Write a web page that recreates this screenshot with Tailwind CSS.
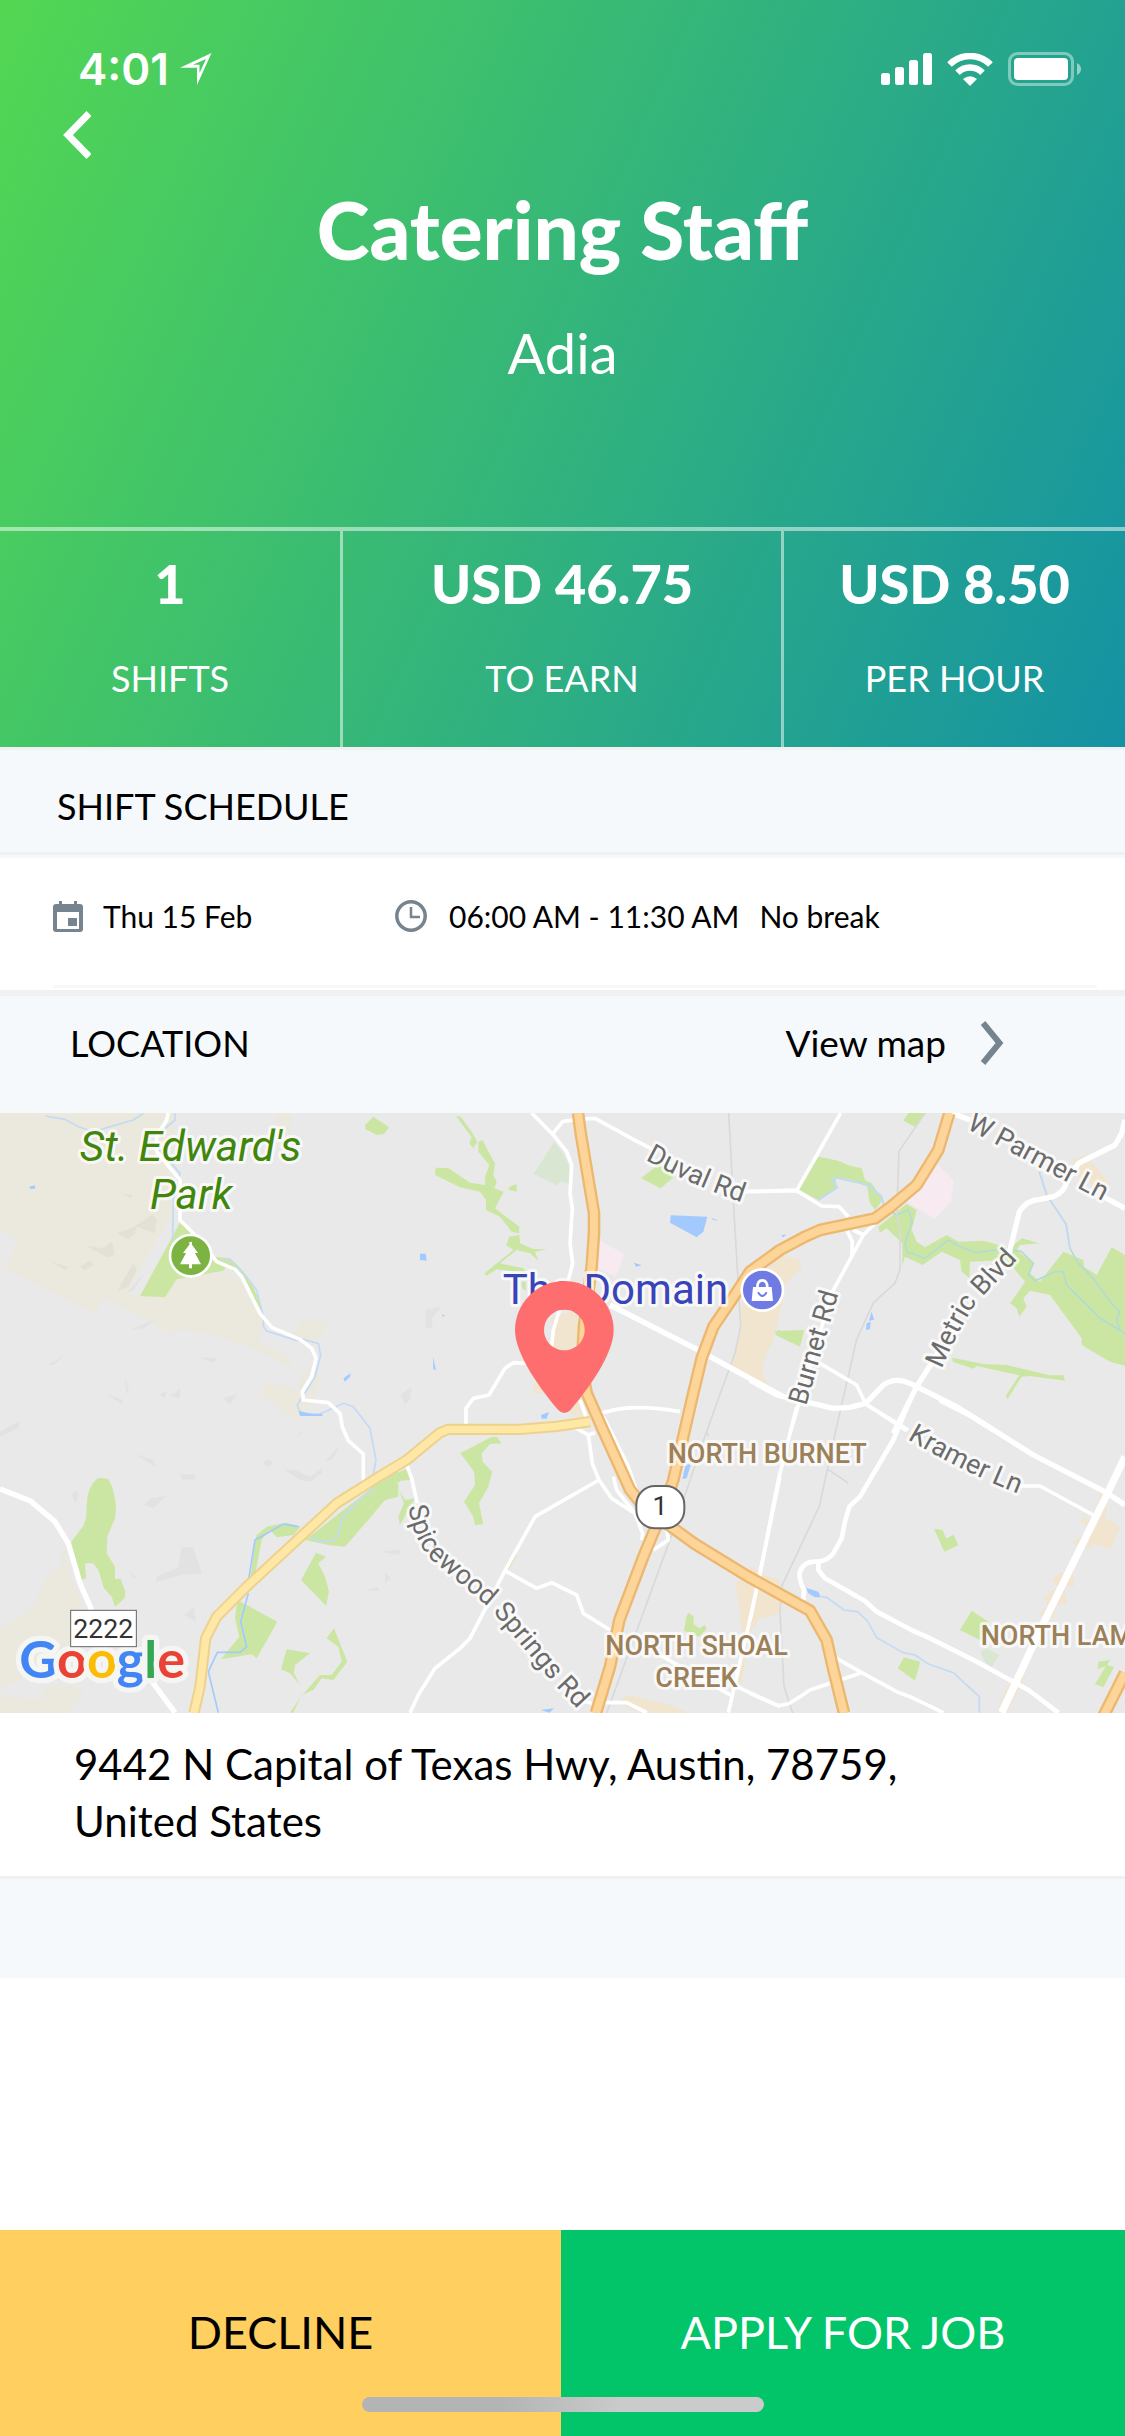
<!DOCTYPE html>
<html lang="en">
<head>
<meta charset="utf-8">
<meta name="viewport" content="width=device-width, initial-scale=1">
<title>Catering Staff – Adia</title>
<script src="https://cdn.jsdelivr.net/npm/@tailwindcss/browser@4"></script>
</head>
<body class="flex min-h-screen flex-col bg-white font-['Lato',sans-serif] text-black">

<header class="bg-[linear-gradient(114deg,#53d752,#1492a4)] text-white">
  <div class="flex h-[90px] items-center justify-between pt-12 pr-[44px] pl-[78px]">
    <div class="flex items-center gap-[11px]">
      <span class="font-['Inter',sans-serif] text-[44px] leading-[42px] font-semibold">4:01</span>
      <svg class="h-8 w-8" viewBox="0 0 32 32" fill="currentColor" fill-rule="evenodd" aria-hidden="true"><path d="M31.500 0 L0 14.800 H17 V32 Z M26 6 L13 11.800 H19.500 V20 Z" /></svg>
    </div>
    <div class="flex items-center gap-[15px]">
      <svg class="h-8 w-[51px]" viewBox="0 0 51 32" fill="currentColor" aria-hidden="true"><rect y="20" width="9" height="12" rx="2.500"/><rect x="14" y="14" width="9" height="18" rx="2.500"/><rect x="28" y="7" width="9" height="25" rx="2.500"/><rect x="42" width="9" height="32" rx="2.500"/></svg>
      <svg class="h-[33px] w-[46px]" viewBox="0 0 46 33" aria-hidden="true"><g fill="none" stroke="currentColor" stroke-width="6.500"><path d="M2.500 11.500 a29 29 0 0 1 41 0"/><path d="M10.500 19.700 a17.700 17.700 0 0 1 25 0"/></g><path fill="currentColor" d="M16 26 q7 -5.500 14 0 L23 33 Z"/></svg>
      <svg class="h-[34px] w-[73px]" viewBox="0 0 73 34" aria-hidden="true"><rect x="1.500" y="1.500" width="63" height="31" rx="8" fill="none" stroke="#fff" stroke-opacity=".42" stroke-width="3"/><rect x="6" y="6" width="54" height="22" rx="4" fill="#fff"/><path d="M69 11 q4 2 4 6 t-4 6 Z" fill="#fff" fill-opacity=".5"/></svg>
    </div>
  </div>
  <button type="button" aria-label="Back" class="mt-[21px] ml-[63px] block">
    <svg class="h-12 w-7" viewBox="0 0 28 48" fill="none" stroke="currentColor" stroke-width="7"><path d="M26 2.500 L5 24 L26 45.500"/></svg>
  </button>
  <h1 class="mt-[25px] text-center text-[80px] leading-[90px] font-black">Catering Staff</h1>
  <p class="mt-[49px] text-center text-[56px] leading-[60px]">Adia</p>
  <dl class="mt-36 grid grid-cols-[343fr_441fr_341fr] border-t-4 border-white/50 text-center">
    <div class="flex flex-col-reverse gap-[42px] border-r-[3px] border-white/50 pt-[23px] pb-[47px]">
      <dt class="text-[36px] leading-[44px]">SHIFTS</dt>
      <dd class="text-[54px] leading-[60px] font-black">1</dd>
    </div>
    <div class="flex flex-col-reverse gap-[42px] border-r-[3px] border-white/50 pt-[23px] pb-[47px]">
      <dt class="text-[36px] leading-[44px]">TO EARN</dt>
      <dd class="text-[54px] leading-[60px] font-black">USD 46.75</dd>
    </div>
    <div class="flex flex-col-reverse gap-[42px] pt-[23px] pb-[47px]">
      <dt class="text-[36px] leading-[44px]">PER HOUR</dt>
      <dd class="text-[54px] leading-[60px] font-black">USD 8.50</dd>
    </div>
  </dl>
</header>

<main class="flex-1">
  <section>
    <div class="border-b-[3px] border-[#f5f9fc]">
      <h2 class="border-y-[3px] border-[#f1f1f1] bg-[#f5f9fc] pt-[34px] pb-[24px] pl-[57px] text-[36px] leading-[44px]">SHIFT SCHEDULE</h2>
    </div>
    <div class="mb-[2px] ml-[53px] mr-7 flex items-center border-b-[3px] border-[#f5f9fc] pt-[38px] pb-[49px] text-[30px] leading-10">
      <div class="flex w-[342px] items-center gap-5">
        <svg class="h-8 w-[30px]" viewBox="0 0 30 32" fill="#75848f" aria-hidden="true"><path fill-rule="evenodd" d="M6 1 h3 v3 h12 v-3 h3 v3 h3 a3 3 0 0 1 3 3 v22 a3 3 0 0 1 -3 3 H3 a3 3 0 0 1 -3 -3 V7 a3 3 0 0 1 3 -3 h3 Z M4 12 V29 H26 V12 Z"/><path d="M15 18 h9 v8 h-9 Z"/></svg>
        <span>Thu 15 Feb</span>
      </div>
      <svg class="mr-[22px] h-8 w-8" viewBox="0 0 32 32" fill="none" stroke="#75848f" stroke-width="3.500" aria-hidden="true"><circle cx="16" cy="16" r="14.200"/><path stroke-width="2.500" d="M16 7 V17 H25"/></svg>
      <span>06:00 AM - 11:30 AM</span>
      <span class="ml-5">No break</span>
    </div>
  </section>

  <section>
    <div class="flex items-center justify-between border-t-[6px] border-[#f1f1f1] bg-[#f5f9fc] pt-[25px] pr-[121px] pb-12 pl-[70px]">
      <h2 class="text-[36px] leading-[44px]">LOCATION</h2>
      <a href="#map" class="flex items-center gap-[35px] text-[37px] leading-[44px]">View map
        <svg class="h-11 w-[23px]" viewBox="0 0 23 44" fill="none" stroke="#75848f" stroke-width="6" aria-hidden="true"><path d="M2 2 L18.500 22 L2 42"/></svg>
      </a>
    </div>

    <svg id="map" class="block h-auto w-full bg-[#e9e9e9] font-['Roboto',sans-serif]" viewBox="0 0 3375 1800" role="img" aria-label="Map of north Austin with the job location">
      <!-- Land cover -->
      <g transform="translate(0 -339)">
        <path fill="#ebe8dd" d="M0 339 H525 L520 640 L440 770 L385 880 L420 888 L495 890 L530 838 L680 812 L725 850 L790 960 L775 1025 L850 1060 L885 1110 L760 1045 L620 1000 L525 990 L515 1005 L310 890 L288 942 L15 805 L55 722 L0 690 Z M825 339 H875 L870 400 H840 Z M905 958 L985 970 L950 1025 L880 1005 Z M910 1110 L965 1130 L940 1200 L890 1265 L780 1180 L800 1145 L890 1170 Z"/>
        <path fill="#e3e1d6" d="M350 700 L400 682 L455 645 L470 655 L465 700 L410 680 L405 700 L385 718 Z M258 737 L310 745 L335 725 L345 765 L320 772 Z M350 875 L400 790 L410 810 L385 860 Z M155 785 L205 800 L195 810 Z M240 800 L270 780 L280 795 L255 810 Z M365 580 L395 585 V595 Z"/>
        <path fill="#e2e2e2" d="M143 1095 L190 1068 L160 1095 Z M395 988 L465 958 L430 985 Z M597 1072 L650 1075 L640 1088 Z M375 1130 L388 1180 L378 1175 Z M380 880 L440 810 L400 870 Z"/>
        <path fill="#cbe6a3" d="M540 668 L600 720 L640 770 L690 775 Q760 830 785 930 L780 940 L715 825 L680 800 L670 812 L530 838 L495 892 L420 888 Z M1095 375 L1120 350 L1167 382 L1152 402 L1130 405 L1097 388 Z"/>
        <g fill="none" stroke="#c3daf6" stroke-width="5"><path d="M137 348 L195 358 L235 380 L280 395 L400 360 L430 340 M525 340 V360 L490 390 M470 440 L540 520 L520 600 L518 720 M665 780 L690 778 L735 825 L770 870 L790 950 L790 980 L800 993 L890 1022 L910 1018 L955 1030 L962 1065 L945 1130 L915 1180"/></g>
        <path fill="#a3caff" d="M88 560 L105 556 V566 H90 Z M1030 1135 L1052 1120 L1050 1130 L1035 1145 Z"/>
      </g>
      <g transform="translate(1140 -39)">
        <path fill="#cbe6a3" d="M228 48 L242 50 L275 95 L292 125 L280 145 L268 130 L275 112 Z M0 65 L25 85 L0 105 Z M295 125 L308 120 L325 155 L345 190 L340 225 L350 245 L343 265 L371 275 L345 325 L418 380 L417 400 L395 395 L360 350 L318 330 V300 L300 275 L240 262 L165 225 L167 203 L205 204 L270 248 L315 255 L316 228 L328 195 L295 155 Z M385 262 L410 252 V275 L388 270 Z M388 410 L418 405 L420 430 L460 447 L500 448 L465 455 L475 482 L450 460 L410 450 L360 490 L430 505 L440 520 L350 508 L320 527 L313 520 L400 450 L378 435 Z M838 192 L885 228 L842 265 L783 235 Z M425 545 L437 545 V572 L427 565 Z M1185 695 L1200 690 V712 Z"/>
        <path fill="#d9e7d2" d="M523 125 L545 155 L565 190 L575 255 L545 243 L530 256 L461 222 Z"/>
        <path fill="#f7ebf1" d="M660 422 L732 462 L708 530 L655 505 Z"/>
        <path fill="#f1e5d0" d="M1200 465 L1262 480 L1265 505 L1215 555 L1200 640 L1180 720 L1160 760 L1145 810 L1165 860 L1055 800 L1080 700 L1085 610 L1120 560 Z M455 880 L470 840 L510 880 Z M515 650 L590 630 L610 750 L510 760 Z M565 935 L600 890 L612 960 Z"/>
        <path fill="#a3caff" d="M872 346 L982 350 L970 395 L950 412 L870 368 Z M993 353 L1016 362 L1000 360 Z M762 488 L785 496 L768 500 Z M120 461 H137 L140 482 L120 480 Z M187 642 L195 648 L188 650 Z M159 770 L168 810 L160 808 Z M483 945 L507 936 L500 956 H485 Z"/>
        <path fill="#e2e2e2" d="M137 630 L185 620 L155 655 L158 685 L137 684 Z M62 885 L95 862 L90 898 L75 913 Z"/>
      </g>
      <g transform="translate(2250 -39)">
        <path fill="#cbe6a3" d="M475 39 H530 L495 80 L460 62 Z M205 170 L265 182 L300 197 L335 205 L345 240 L365 250 L398 300 L375 330 L358 305 L352 260 L300 238 L255 232 L262 265 L205 300 L145 268 Z M75 693 L163 690 L150 740 L78 706 Z M607 773 L700 792 L770 795 L900 826 L940 826 L945 842 L840 828 L815 830 L772 898 L767 888 L808 826 L680 798 L670 806 L608 785 Z M385 380 L470 312 L500 330 L485 390 L500 425 L525 442 L590 405 L625 425 L700 422 L780 445 L815 415 L868 430 L810 435 L800 450 L850 490 L840 520 L870 545 L940 455 L1000 480 L1002 500 L1040 525 L1085 442 L1125 465 V797 L1080 785 L995 735 V715 L900 585 L840 572 L820 595 L830 620 L808 650 L800 625 L780 610 L805 575 L825 545 L770 480 L660 485 L658 535 L635 515 L630 480 L575 455 L518 495 L465 470 L457 497 V430 L410 385 L390 398 Z"/>
        <path fill="#f7ebf1" d="M563 194 L611 240 L603 305 L555 358 L470 305 Z"/>
        <path fill="#f1e5d0" d="M968 178 L1010 165 L1080 255 L1065 275 L980 225 Z M0 640 L85 645 L75 670 L55 690 L50 760 L30 800 L52 855 L0 840 Z"/>
        <g fill="none" stroke="#c3daf6" stroke-width="5"><path d="M205 300 L262 262 L245 242 L260 233 L355 255 L395 290 L402 320 L440 345 L475 330 L487 365 L465 430 L470 455 L525 475 L595 420 L630 440 L680 458 L770 445 L815 455 L850 490 L835 525 L855 543 L915 515 L940 515 L950 555 L1050 655 L1125 700 M868 215 L890 285 L948 372 L960 445 L985 490 L1025 530 L1085 610 L1110 635 L1100 660 L1110 690" stroke="#b4dbd3"/><path d="M868 215 L890 285 L948 372 L960 445 M205 300 L262 262 L245 242 L260 233 L355 255 L395 290 L402 320"/></g>
        <path fill="#a3caff" d="M365 635 L372 660 L357 662 Z M350 670 L362 665 L360 687 L348 690 Z M95 405 L110 404 L98 412 Z"/>
      </g>
      <g transform="translate(0 801)">
        <path fill="#ebe8dd" d="M195 490 L200 545 L250 690 L200 800 L60 760 L0 750 L100 680 L135 600 L190 550 L180 520 Z M0 740 L200 680 L210 800 L60 900 L0 925 Z M0 950 L130 960 V925 L180 912 L250 930 L235 960 L205 1000 H0 Z"/>
        <path fill="#cbe6a3" d="M300 293 L325 297 Q345 330 348 385 L345 415 L322 470 L320 520 L345 560 V597 L362 597 L376 635 L374 655 L345 680 L335 650 L312 625 L295 570 L280 550 H255 L258 595 L245 600 L212 488 L250 437 L258 415 L262 350 Q275 300 300 293 Z M770 465 L800 440 L860 428 L902 440 L880 465 L830 472 L810 450 L785 480 L770 560 L765 600 L750 605 L765 480 Z M915 480 L1120 320 L1195 308 V350 L1155 360 L1100 425 L1035 500 L985 495 Z M1195 275 L1200 305 L1125 325 L1100 320 Z M948 518 L978 530 L955 550 L975 590 L987 635 L978 677 L903 600 Z M712 660 L832 725 L770 835 L755 823 L663 838 L718 770 L705 715 Z M1002 745 L1042 845 L1000 900 L965 895 L940 930 L905 945 L880 998 H870 L903 950 L960 885 L995 885 L1025 845 L1015 800 L980 775 Z M860 808 L930 820 L885 855 L882 880 L900 915 L870 880 L843 868 Z"/>
        <path fill="#e2e2e2" d="M545 502 L580 500 L605 580 L545 585 L490 600 L467 605 L470 590 L535 562 Z M405 222 L460 240 L468 262 Z M430 375 L455 355 L498 348 L460 385 Z M852 268 L885 270 L930 290 L967 265 L965 280 L930 305 L900 300 Z M0 155 L60 122 L55 145 L0 170 Z M320 42 L368 60 V75 Z M540 283 H585 V297 L550 300 Z M215 345 L228 330 L235 345 L228 370 Z M880 180 L915 145 L900 165 Z M975 245 L1018 195 L1000 235 Z M553 705 L580 680 L588 725 Z M390 573 L415 598 L395 588 Z M1095 630 L1135 620 V632 Z M1155 575 L1172 595 L1155 612 Z M1140 515 L1200 510 V525 Z M670 55 L712 42 L690 73 Z M480 45 L500 30 L495 55 Z M510 48 L540 28 V55 Z M790 245 L805 238 L820 250 L800 262 Z"/>
        <g fill="none" stroke="#c3daf6" stroke-width="5"><path d="M935 0 L892 75 L900 100 L960 102 L1030 70 L1060 80 L1110 145 L1128 240 L1120 285 M1125 325 L1070 365 L1025 415 L1015 465 L995 482 L960 485 L935 470"/><path stroke="#a3caff" d="M895 440 L850 432 L765 480 L745 605 M745 640 L722 725 L740 800 L720 817 H652 L625 875 L655 998"/></g>
        <path fill="#a3caff" d="M897 92 L935 103 L967 102 V108 H900 Z"/>
      </g>
      <g transform="translate(1140 861)">
        <path fill="#cbe6a3" d="M333 112 L350 110 L365 130 L330 132 L305 160 L308 185 L337 215 L325 260 L297 310 L310 373 L285 375 L280 350 L252 305 L285 255 L282 215 L258 182 L240 160 Z M0 240 L85 205 L90 240 L30 245 Z M0 255 L50 250 L45 285 L0 310 Z M57 270 L75 300 L105 295 L60 375 L55 350 L72 310 Z M925 638 L942 650 L940 672 L958 685 L975 675 L980 687 L958 710 L912 692 L918 655 Z M382 505 L413 445 L410 465 L385 510 Z"/>
        <path fill="#f1e5d0" d="M1068 550 L1115 500 L1150 525 L1200 540 V640 L1150 655 L1130 640 L1110 715 L1085 690 Z M1075 780 L1100 760 L1085 850 L1060 860 Z M710 905 L745 885 L870 915 L925 938 H780 Z"/>
        <path fill="#a3caff" d="M918 190 L932 195 L920 235 L907 237 Z M482 930 L522 925 L508 938 Z"/>
      </g>
      <g transform="translate(2250 861)">
        <path fill="#cbe6a3" d="M552 386 L578 390 L588 416 L611 404 L625 436 L583 455 Z M665 632 L715 665 L700 725 L630 690 Z M462 772 L511 785 L495 842 L443 805 Z M1045 785 L1080 780 L1072 795 L1092 802 L1060 862 L1035 852 L1068 798 L1042 808 Z"/>
        <path fill="#d9e7d2" d="M690 755 L710 745 L748 765 L723 805 L705 785 Z"/>
        <path fill="#f1e5d0" d="M1050 280 L1075 290 L1065 350 L1110 382 L1080 448 L1025 430 L1030 445 L1000 440 L970 510 L972 560 L945 560 L950 612 L920 615 L910 655 L865 645 L890 620 L883 590 L925 560 L905 540 L930 520 L950 515 L985 440 L965 425 L1015 400 L1020 380 L990 365 L1000 352 L1030 365 Z M0 560 L35 520 L85 545 L65 655 L40 640 L20 670 L0 695 Z M805 825 L825 830 L790 900 L770 938 H740 L770 865 Z"/>
        <path fill="none" stroke="#c3daf6" stroke-width="5" d="M215 590 L230 592 L282 630 L322 635 L352 662 L380 713 L460 758 L495 765 L535 792 L610 818 L688 890 V938"/>
        <path fill="#a3caff" d="M168 563 L205 575 L213 592 L195 592 L175 580 Z"/>
      </g>

      <!-- Railways -->
      <path fill="none" stroke="#d9d9d9" stroke-width="5" d="M2186 0 L2205 350 L2222 640 L2205 720 L2120 955 L2125 970 M2120 955 L2010 1280 L1820 1800 M2775 0 L2697 115 L2690 300 L2700 350 V470 L2685 510 L2620 570 L2570 680 L2510 940 L2482 1070 L2458 1180 L2345 1420 L2340 1500 L2352 1720 L2378 1800 M2485 1070 L2545 1110"/>

      <!-- Streets -->
      <g fill="none" stroke="#fff" stroke-width="11" stroke-linejoin="round">
        <path transform="translate(0 -339)" d="M505 339 L500 360 L470 410 V455 L540 540 V660 L600 720 L650 785 L705 808 L725 830 L780 940 L815 982 L900 1018 L935 1045 L948 1075 L935 1130 L907 1175 L910 1200 L985 1208 L1020 1240 L1027 1280 L1045 1322 L1090 1362 V1445"/>
        <path transform="translate(0 801)" stroke-width="16" d="M0 327 L90 362 L165 425 L205 490 L240 610 L275 690 M445 890 L525 998"/>
        <g transform="translate(1140 -39)">
          <path d="M455 39 L520 105 L560 155 L575 195 L570 280 L577 325 L570 430 L578 490 L560 560 L520 690 L515 740 M515 105 L548 65 L590 58 L645 55 L760 118 L830 155 M1090 275 L1250 270 M258 980 V925 L280 895 L327 885 L375 805 L400 788 L440 790 M600 900 L625 970 M640 950 Q730 905 900 935"/>
          <path stroke-width="16" d="M690 615 L945 745 L1210 890"/>
        </g>
        <g transform="translate(2250 -39)">
          <path d="M272 39 L140 272 L0 275 M140 272 L215 318 L268 320 L295 350 M290 390 L307 425 L305 470 M395 350 L340 405 L245 580 L165 850 L120 1000 M310 390 L340 405 M210 790 L320 855 L347 912 L475 990"/>
          <path stroke-width="16" d="M0 840 L80 885 L250 925 L300 922 L347 910 L400 855 Q435 830 480 850 L620 920 L730 990 M605 39 L660 60 M1050 285 L1125 325 M775 470 L808 335 Q830 300 870 298 L910 290 Q945 275 950 245 L985 190 L1095 135 L1115 100 L1125 60 M570 750 L500 860 L430 1000"/>
        </g>
        <g transform="translate(1140 861)">
          <path d="M80 195 L95 235 L112 310 M580 80 L625 105 L637 190 L657 240 L695 295 L765 340 L788 400 L785 420 M625 105 L645 98 M657 240 L465 350 L375 512 L270 715 L240 745 L165 805 L115 885 L90 938 M375 512 L470 565 L515 548 L590 585 L610 640 L690 690 M670 50 L745 200 L770 275 M700 230 L710 270 L765 340 M820 450 L865 420 L860 390 M1200 230 L1140 520 L1105 680 L1045 938 M840 765 L1060 890 M1070 860 L1200 920 M675 908 H740 L800 938 M600 900 L635 910"/>
        </g>
        <g transform="translate(2250 861)">
          <path d="M140 20 L85 240 L30 520 L0 660 M347 12 L470 92 M800 258 H870 L1035 348 M260 775 L335 818 L440 875 L480 890 L580 938 M335 818 L180 870 L150 890 L115 912 L85 917 L0 880"/>
          <path stroke-width="14" d="M480 0 L430 120 L330 290 L298 320 L285 365 L275 415 L250 460 Q235 480 205 485 Q160 480 148 520 Q150 550 162 570 L160 600 M205 485 L205 510 L225 535 L345 603 L380 635 L490 693 L530 710 L680 785 L835 870 L925 938"/>
          <path stroke-width="16" d="M570 0 L660 45 L850 165 L1070 278 L1125 315"/>
          <path stroke-width="22" d="M1125 170 L1070 285 L885 660 L755 938"/>
        </g>
      </g>

      <!-- Highways -->
      <g fill="none" stroke-linejoin="round">
        <path stroke="#edd28e" stroke-width="34" d="M1770 926 L1670 940 L1560 949 H1345 L1320 959 L1220 1041 L1140 1089 L1010 1171 L740 1421 L650 1511 L617 1576 L600 1721 L582 1800"/>
        <path stroke="#ffe8a6" stroke-width="22" d="M1770 926 L1670 940 L1560 949 H1345 L1320 959 L1220 1041 L1140 1089 L1010 1171 L740 1421 L650 1511 L617 1576 L600 1721 L582 1800"/>
        <path stroke="#ecb76f" stroke-width="38" d="M1734 0 L1742 60 L1762 180 L1782 300 L1782 360 L1775 460 L1752 640 L1745 760 L1760 840 L1806 945 L1890 1130 L1930 1180 L2020 1246 L2085 1293 L2240 1388 L2430 1493 L2480 1581 L2500 1670 L2532 1800 M2848 0 L2815 111 L2750 216 L2670 283 L2625 316 L2460 351 L2415 371 L2340 411 L2250 476 L2195 560 L2140 641 L2105 735 L2075 861 L2020 1101 L1985 1200 L1930 1331 L1858 1521 L1830 1661 L1788 1800 M3375 1680 L3310 1810"/>
        <path stroke="#fed599" stroke-width="24" d="M1734 0 L1742 60 L1762 180 L1782 300 L1782 360 L1775 460 L1752 640 L1745 760 L1760 840 L1806 945 L1890 1130 L1930 1180 L2020 1246 L2085 1293 L2240 1388 L2430 1493 L2480 1581 L2500 1670 L2532 1800 M2848 0 L2815 111 L2750 216 L2670 283 L2625 316 L2460 351 L2415 371 L2340 411 L2250 476 L2195 560 L2140 641 L2105 735 L2075 861 L2020 1101 L1985 1200 L1930 1331 L1858 1521 L1830 1661 L1788 1800 M3375 1680 L3310 1810"/>
      </g>

      <!-- Labels -->
      <defs>
        <path id="duval" d="M1936 140 Q2100 230 2270 282"/>
        <path id="parmer" d="M2898 46 L3375 300"/>
        <path id="burnet" d="M2418 880 L2530 490"/>
        <path id="metric" d="M2825 768 Q2875 650 2925 575 L3080 410"/>
        <path id="kramer" d="M2722 978 Q2900 1085 3100 1160"/>
        <path id="spicewood" d="M1225 1180 Q1245 1310 1320 1361 L1470 1486 L1660 1711 L1790 1850"/>
      </defs>
      <g stroke="#fff" stroke-opacity=".7" stroke-width="18" stroke-linejoin="round" paint-order="stroke">
        <g fill="#6b6b6b" font-size="81">
          <text><textPath href="#duval">Duval Rd</textPath></text>
          <text><textPath href="#parmer">W Parmer Ln</textPath></text>
          <text><textPath href="#burnet">Burnet Rd</textPath></text>
          <text><textPath href="#metric">Metric Blvd</textPath></text>
          <text><textPath href="#kramer">Kramer Ln</textPath></text>
          <text><textPath href="#spicewood">Spicewood Springs Rd</textPath></text>
        </g>
        <g fill="#41860b" font-size="127" font-style="italic" text-anchor="middle"><text x="572" y="143">St. Edward's</text><text x="574" y="289">Park</text></g>
        <text x="1508" y="573" fill="#3844b8" font-size="126">The Domain</text>
        <g fill="#9b8058" font-size="81" font-weight="500"><text x="2003" y="1051">NORTH BURNET</text><text x="1816" y="1626">NORTH SHOAL</text><text x="1966" y="1723">CREEK</text><text x="2942" y="1597">NORTH LAMAR</text></g>
      </g>
      <g stroke="#fff" stroke-width="8">
        <circle cx="572" cy="428" r="62" fill="#7cb342"/>
        <circle cx="2287" cy="531" r="62" fill="#6f7be3"/>
      </g>
      <path fill="#fff" d="M568 387 h8 v8 l18 25 h-9 l18 34 h-27 v12 h-9 v-12 h-27 l18 -34 h-9 l19 -25 Z"/>
      <path fill="#fff" d="M2259 522 h56 l4 42 h-64 Z"/>
      <path fill="none" stroke="#fff" stroke-width="8" d="M2272 524 Q2272 502 2287 502 Q2302 502 2302 524"/>
      <path fill="none" stroke="#6f7be3" stroke-width="6" d="M2274 538 Q2287 560 2300 538"/>
      <rect x="1909" y="1119" width="144" height="127" rx="56" fill="#fff" stroke="#666" stroke-width="6"/>
      <text x="1980" y="1206" fill="#333" font-size="80" text-anchor="middle">1</text>
      <text x="58" y="1696" class="font-['Lato',sans-serif]" font-size="156" font-weight="700" stroke="#f5f5f3" stroke-width="32" stroke-linejoin="round" paint-order="stroke"><tspan fill="#4285f4">G</tspan><tspan fill="#ea4335">o</tspan><tspan fill="#fbbc05">o</tspan><tspan fill="#4285f4">g</tspan><tspan fill="#34a853">l</tspan><tspan fill="#ea4335">e</tspan></text>
      <rect x="212" y="1492" width="197" height="109" fill="#fff" stroke="#666" stroke-width="3"/>
      <text x="310" y="1574" fill="#333" font-size="80" text-anchor="middle">2222</text>
      <path fill="#ff6e6e" fill-rule="evenodd" d="M1693 504 A148 148 0 0 1 1841 652 C1841 725 1760 835 1712 890 Q1693 910 1674 890 C1626 835 1545 725 1545 652 A148 148 0 0 1 1693 504 Z M1693 590 a61 61 0 1 0 .1 0 Z"/>
    </svg>
    <address class="pt-[23px] pr-[190px] pb-[26px] pl-[74px] text-[42px] leading-[57px] not-italic">9442 N Capital of Texas Hwy, Austin, 78759, United States</address>
  </section>
  <div class="h-[102px] border-t-[3px] border-[#f1f1f1] bg-[#f5f9fc]"></div>
</main>

<footer class="relative grid h-[206px] grid-cols-[561fr_564fr] text-[45px]">
  <button type="button" class="bg-[#ffcf60]">DECLINE</button>
  <button type="button" class="bg-[#02c569] text-white">APPLY FOR JOB</button>
  <div class="absolute bottom-6 left-1/2 h-[15px] w-[402px] -translate-x-1/2 rounded-full bg-linear-to-r from-[#b4b4b4] from-35% to-[#cbcbcb] to-65%"></div>
</footer>
</body>
</html>
